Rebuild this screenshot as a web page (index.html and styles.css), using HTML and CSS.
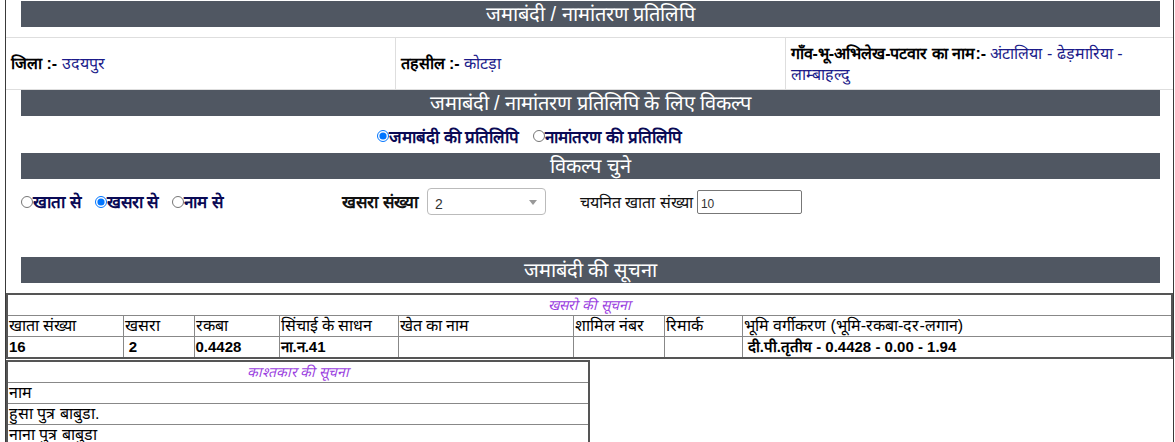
FILE: index.html
```html
<!DOCTYPE html>
<html lang="hi">
<head>
<meta charset="utf-8">
<title>जमाबंदी / नामांतरण प्रतिलिपि</title>
<link rel="stylesheet" href="styles.css">
</head>
<body>
<div class="page">
  <div class="bar bar-first">जमाबंदी / नामांतरण प्रतिलिपि</div>

  <table class="info">
    <colgroup><col class="c1"><col class="c2"><col class="c3"></colgroup>
    <tr>
      <td><b>जिला :-</b> <span class="val">उदयपुर</span></td>
      <td><b>तहसील :-</b> <span class="val">कोटड़ा</span></td>
      <td><b>गाँव-भू-अभिलेख-पटवार का नाम:-</b> <span class="val">अंटालिया - ढेड़मारिया - लाम्बाहल्दु</span></td>
    </tr>
  </table>

  <div class="bar">जमाबंदी / नामांतरण प्रतिलिपि के लिए विकल्प</div>

  <div class="choice">
    <label class="radio"><input type="radio" name="copy" checked>जमाबंदी की प्रतिलिपि</label>
    <label class="radio"><input type="radio" name="copy">नामांतरण की प्रतिलिपि</label>
  </div>

  <div class="bar">विकल्प चुने</div>

  <div class="opts">
    <div class="opt-radios">
      <label class="radio"><input type="radio" name="by">खाता से</label>
      <label class="radio"><input type="radio" name="by" checked>खसरा से</label>
      <label class="radio"><input type="radio" name="by">नाम से</label>
    </div>
    <div class="opt-field opt-field1">
      <span class="lbl-bold">खसरा संख्या</span>
      <span class="sel-wrap"><select class="sel"><option>2</option></select></span>
    </div>
    <div class="opt-field opt-field2">
      <span class="lbl">चयनित खाता संख्या</span>
      <input class="txt" type="text" value="10">
    </div>
  </div>

  <div class="bar">जमाबंदी की सूचना</div>

  <table class="grid khasra">
    <colgroup>
      <col class="w1"><col class="w2"><col class="w3"><col class="w4">
      <col class="w5"><col class="w6"><col class="w7"><col class="w8">
    </colgroup>
    <tr><td colspan="8" class="cap">खसरो की सूचना</td></tr>
    <tr class="hd">
      <td>खाता संख्या</td>
      <td>खसरा</td>
      <td>रकबा</td>
      <td>सिंचाई के साधन</td>
      <td>खेत का नाम</td>
      <td>शामिल नंबर</td>
      <td>रिमार्क</td>
      <td>भूमि वर्गीकरण (भूमि-रकबा-दर-लगान)</td>
    </tr>
    <tr class="dt">
      <td>16</td>
      <td>&nbsp;2</td>
      <td>0.4428</td>
      <td>ना.न.41</td>
      <td></td>
      <td></td>
      <td></td>
      <td>&nbsp;दी.पी.तृतीय - 0.4428 - 0.00 - 1.94</td>
    </tr>
  </table>

  <table class="grid owner">
    <tr><td class="cap">काश्तकार की सूचना</td></tr>
    <tr><td>नाम</td></tr>
    <tr><td>हुसा पुत्र बाबुडा.</td></tr>
    <tr><td>नाना पुत्र बाबुडा</td></tr>
  </table>
</div>
</body>
</html>
```

FILE: styles.css
```css
html, body {
  margin: 0;
  padding: 0;
  background: #fff;
}
body {
  font-family: "Liberation Sans", Arial, sans-serif;
  font-size: 16px;
  color: #000;
}
.page {
  margin-left: 5px;
  width: 1167px;
  min-height: 442px;
  border-left: 1px solid #3a3a3a;
  border-right: 1px solid #3a3a3a;
  padding-top: 1px;
}
.bar {
  margin: 0 13px 0 15px;
  height: 26px;
  line-height: 26px;
  background: #505762;
  color: #fff;
  text-align: center;
  font-size: 20px;
}
.info {
  width: 100%;
  border-collapse: collapse;
  margin-top: 10px;
  table-layout: fixed;
}
.info td {
  border: 1px solid #dedede;
  height: 51px;
  padding: 0 5px;
  vertical-align: middle;
  font-size: 16px;
  line-height: 21px;
}
.info td:first-child { border-left: 0; }
.info td:last-child { border-right: 0; }
.info .c1 { width: 389px; }
.info .c2 { width: 390px; }
.val { color: #1b1b8a; }

.choice {
  height: 37px;
  display: flex;
  align-items: center;
  padding-left: 371px;
  padding-top: 3px;
  box-sizing: border-box;
  gap: 14px;
}
.radio {
  display: inline-flex;
  align-items: center;
  font-weight: bold;
  color: #0a0a55;
  font-size: 17px;
}
.radio input {
  margin: 0;
  width: 12px;
  height: 12px;
}
.opts {
  height: 78px;
  display: flex;
  align-items: flex-start;
  padding: 9px 0 0 15px;
  box-sizing: border-box;
}
.opt-radios {
  width: 321px;
  display: flex;
  gap: 14px;
  padding-top: 2px;
}
.opt-field {
  display: flex;
  align-items: center;
  gap: 4px;
}
.opt-field1 {
  width: 204px;
}
.opt-field2 {
  margin-left: 34px;
  padding-top: 2px;
}
.lbl-bold {
  font-weight: bold;
  color: #111;
  font-size: 17px;
  flex: 1;
}
.lbl { color: #111; font-size: 16px; }
.sel-wrap {
  position: relative;
  display: inline-block;
}
.sel-wrap::after {
  content: "";
  position: absolute;
  right: 9px;
  top: 12px;
  border-left: 4px solid transparent;
  border-right: 4px solid transparent;
  border-top: 5px solid #999;
  pointer-events: none;
}
.sel {
  -webkit-appearance: none;
  appearance: none;
  width: 119px;
  height: 27px;
  border: 1px solid #bbb;
  border-radius: 4px;
  background: #fff;
  font-family: "Liberation Sans", Arial, sans-serif;
  font-size: 14px;
  padding: 4px 0 0 7px;
  color: #333;
}
.txt {
  width: 105px;
  height: 24px;
  box-sizing: border-box;
  border: 1px solid #777;
  border-radius: 2px;
  font-family: "Liberation Sans", Arial, sans-serif;
  font-size: 12px;
  padding: 3px 3px 0 3px;
  color: #333;
}

.grid {
  border-collapse: collapse;
  border: 2px solid #555;
  table-layout: fixed;
}
.grid td {
  border: 1px solid #888;
  height: 20px;
  padding: 0 1px;
  font-size: 16px;
  line-height: 20px;
  white-space: nowrap;
  overflow: hidden;
}
.khasra {
  margin-top: 10px;
  width: 1167px;
}
.grid td.cap {
  text-align: center;
  font-style: italic;
  color: #9b3fe0;
  font-size: 14px;
}
.khasra .w1 { width: 116px; }
.khasra .w2 { width: 71px; }
.khasra .w3 { width: 85px; }
.khasra .w4 { width: 119px; }
.khasra .w5 { width: 175px; }
.khasra .w6 { width: 91px; }
.khasra .w7 { width: 78px; }
.khasra .w8 { width: auto; }
.grid .dt td {
  font-weight: bold;
  font-size: 15px;
}
.owner {
  margin-top: 1px;
  width: 584px;
}
```
